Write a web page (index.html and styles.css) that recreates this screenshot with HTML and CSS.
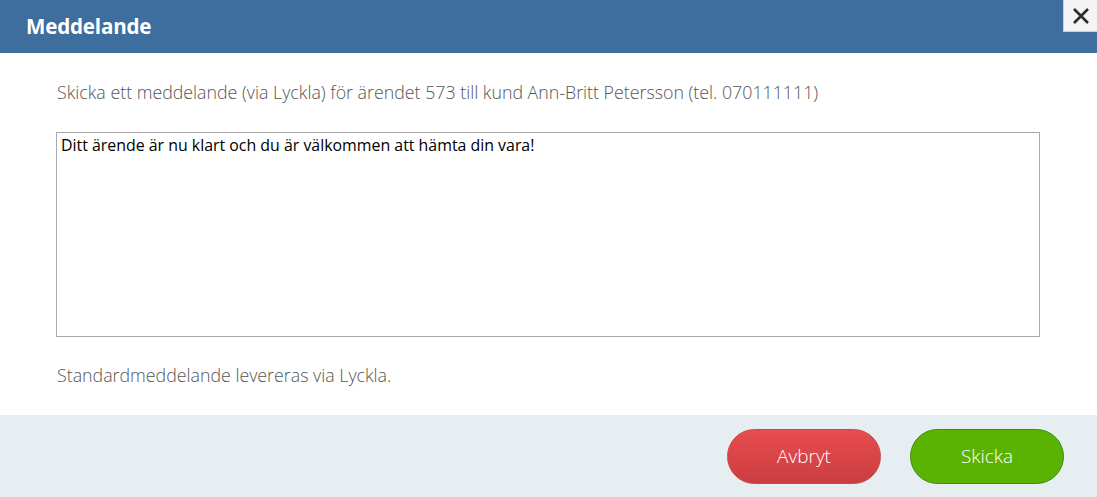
FILE: index.html
```html
<!DOCTYPE html>
<html lang="sv">
<head>
    <meta charset="UTF-8">
    <title>Meddelande</title>
    <link rel="stylesheet" href="styles.css">
</head>
<body>
    <div class="dialog">
        <div class="dialog-header">
            <h1 class="dialog-title">Meddelande</h1>
            <button class="close" title="Stäng">
                <svg width="18" height="18" viewBox="0 0 18 18">
                    <path d="M2 2 L16 16 M16 2 L2 16" stroke="#2b2b2b" stroke-width="2.6" fill="none"/>
                </svg>
            </button>
        </div>
        <div class="dialog-body">
            <p class="intro">Skicka ett meddelande (via Lyckla) för ärendet 573 till kund Ann-Britt Petersson (tel. 070111111)</p>
            <textarea class="message">Ditt ärende är nu klart och du är välkommen att hämta din vara!</textarea>
            <p class="note">Standardmeddelande levereras via Lyckla.</p>
        </div>
        <div class="dialog-footer">
            <button class="btn cancel">Avbryt</button>
            <button class="btn send">Skicka</button>
        </div>
    </div>
</body>
</html>
```

FILE: styles.css
```css
body {
    margin: 0;
    font-family: "Open Sans", "Noto Sans", Arial, sans-serif;
    background: #fff;
}

.dialog {
    width: 1097px;
    height: 497px;
    display: flex;
    flex-direction: column;
}

.dialog-header {
    height: 53px;
    background: #3d6e9e;
    display: flex;
    align-items: flex-start;
    justify-content: space-between;
    flex-shrink: 0;
}

.dialog-title {
    margin: 0;
    padding: 12px 0 0 26px;
    font-size: 20.6px;
    font-weight: 700;
    color: #fff;
    letter-spacing: -0.2px;
}

.close {
    width: 34px;
    height: 32px;
    margin: 0;
    padding: 0;
    border: 1px solid #c9cfd6;
    border-top: none;
    border-right: none;
    background: #f4f4f4;
    display: flex;
    align-items: center;
    justify-content: center;
    cursor: pointer;
}

.dialog-body {
    flex: 1;
    padding: 0 57px 0 56px;
}

.intro {
    margin: 27px 0 0 1px;
    font-size: 17.8px;
    font-weight: 300;
    color: #555;
    white-space: nowrap;
}

.message {
    display: block;
    width: 984px;
    height: 205px;
    margin-top: 28px;
    padding: 1px 4px;
    box-sizing: border-box;
    border: 1px solid #a9a9a9;
    font-family: "Open Sans", "Noto Sans", Arial, sans-serif;
    font-size: 15.9px;
    color: #000;
    resize: none;
}

.note {
    margin: 26px 0 0 1px;
    font-size: 17.8px;
    font-weight: 300;
    color: #555;
}

.dialog-footer {
    height: 82px;
    background: #e6eef1;
    display: flex;
    justify-content: flex-end;
    align-items: center;
    gap: 29px;
    padding-right: 33px;
    flex-shrink: 0;
}

.btn {
    width: 154px;
    height: 55px;
    border-radius: 28px;
    font-family: "Open Sans", "Noto Sans", Arial, sans-serif;
    font-size: 19px;
    font-weight: 300;
    color: #fff;
    cursor: pointer;
}

.cancel {
    background: linear-gradient(#e84d4f, #cb3d3f);
    border: 1px solid #c9494b;
}

.send {
    background: #5ab300;
    border: 1px solid #3b8f12;
}
```
